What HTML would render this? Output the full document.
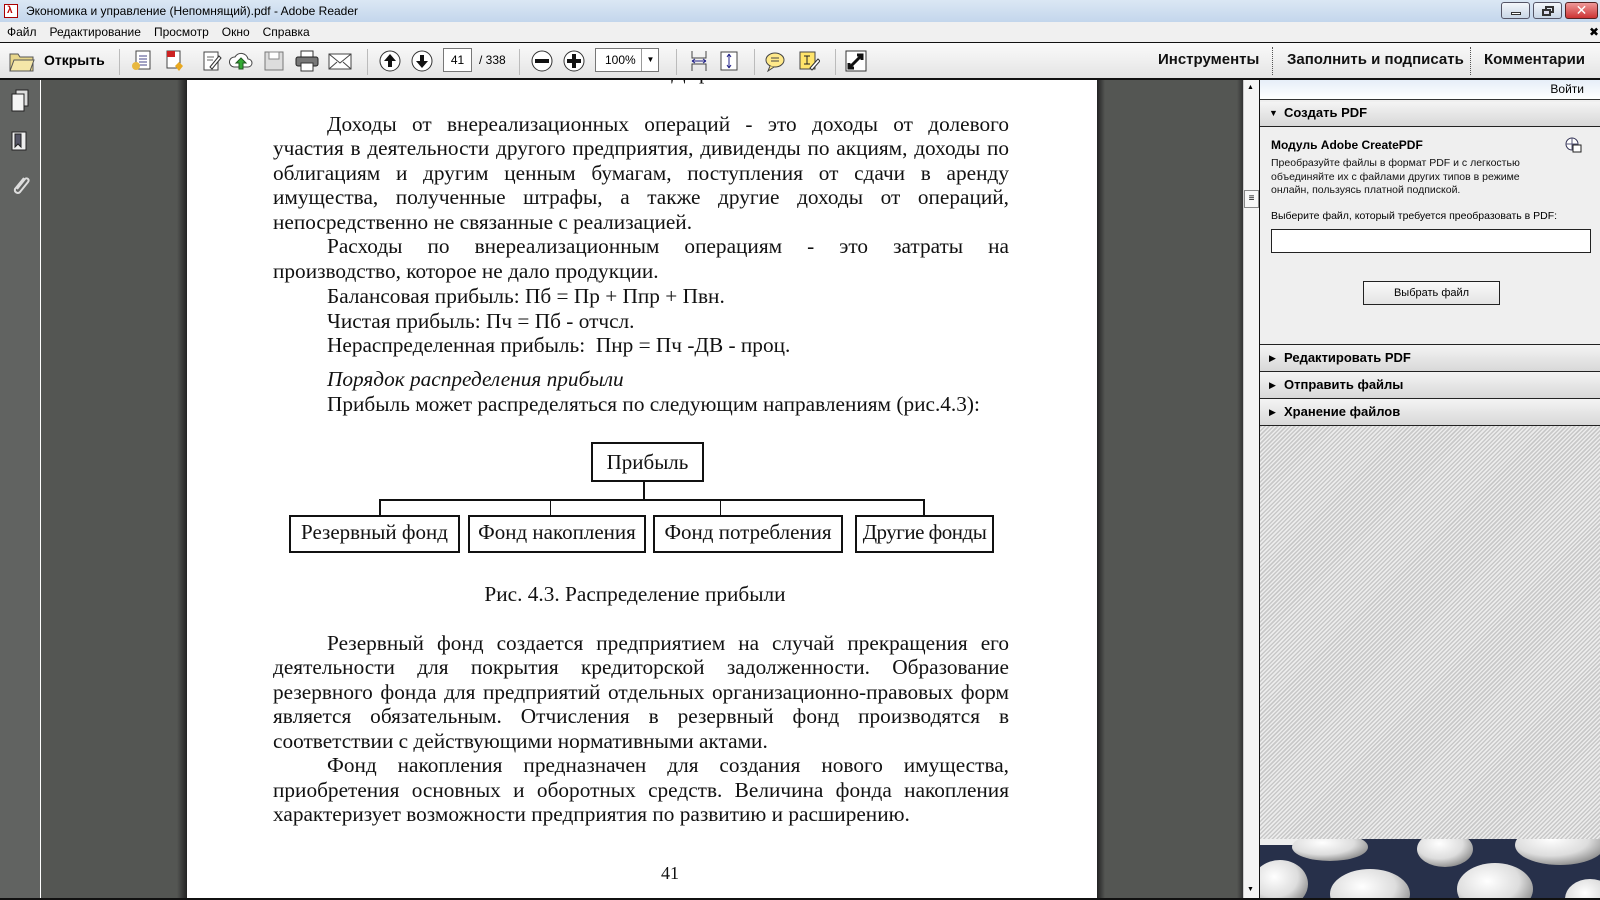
<!DOCTYPE html>
<html><head><meta charset="utf-8"><style>
*{margin:0;padding:0;box-sizing:border-box}
body{width:1600px;height:900px;overflow:hidden;position:relative;background:#545653;font-family:"Liberation Sans","DejaVu Sans",sans-serif;}
.a{position:absolute}
#title{left:0;top:0;width:1600px;height:22px;background:linear-gradient(#dbe7f4,#c3d6ec);font-size:12px;line-height:22px;}
#menu{left:0;top:22px;width:1600px;height:20px;background:#f0f0f0;font-size:12px;line-height:20px;}
#menu span{margin-left:7px;margin-right:6px}
#tb{left:0;top:42px;width:1600px;height:38px;background:linear-gradient(#fafafa,#e4e4e4);border-top:1px solid #111;border-bottom:2px solid #111;}
.ic{position:absolute;top:7px}
.sep{position:absolute;top:6px;width:1px;height:26px;background:#bbb}
.tab{position:absolute;top:0;height:36px;line-height:34px;font-weight:bold;font-size:15px;color:#111}
.dot{position:absolute;top:4px;height:28px;border-left:1px dotted #555}
#nav{left:0;top:80px;width:41px;height:818px;background:#616361;border-right:1px solid #fff}
#page{left:187px;top:80px;width:910px;height:818px;background:#fff;font-family:"Liberation Serif","DejaVu Serif",serif;font-size:21.3px;color:#111;overflow:hidden}
.l{position:absolute;left:86px;width:736px;white-space:nowrap;line-height:24px}
.j{text-align:justify;text-align-last:justify}
.i{left:140px}
.box{position:absolute;border:2px solid #111;text-align:center;font-size:21px;line-height:34px;white-space:nowrap}
#sb{left:1243px;top:80px;width:16px;height:818px;background:#f4f4f4;border-left:1px solid #ccc}
#rp{left:1259px;top:80px;width:341px;height:818px;background:#efefef;border-left:1px solid #111}
.hd{position:absolute;left:0;width:341px;height:27px;background:linear-gradient(#f4f4f4,#d8d8d8);border-top:1px solid #222;font-weight:bold;font-size:13px;line-height:26px;padding-left:24px}
.hd b{position:absolute;left:9px;font-size:9px}
#status{left:0;top:898px;width:1600px;height:2px;background:#111}
</style></head><body>
<div id="title" class="a"><span style="position:absolute;left:4px;top:4px;width:14px;height:14px;background:#fff;border:1px solid #a00"><span style="position:absolute;left:2px;top:1px;color:#b00;font-size:10px;line-height:10px;font-weight:bold">λ</span></span><span style="margin-left:26px">Экономика и управление (Непомнящий).pdf - Adobe Reader</span>
<div class="a" style="left:1501px;top:2px;width:29px;height:17px;border:1px solid #556;border-radius:3px;background:linear-gradient(#f4f7fb,#c9d6e6)"><div class="a" style="left:9px;top:9px;width:10px;height:3px;background:#fff;border:1px solid #333"></div></div>
<div class="a" style="left:1533px;top:2px;width:29px;height:17px;border:1px solid #556;border-radius:3px;background:linear-gradient(#f4f7fb,#c9d6e6)"><div class="a" style="left:11px;top:3px;width:9px;height:7px;border:2px solid #333"></div><div class="a" style="left:8px;top:6px;width:9px;height:7px;border:2px solid #333;background:#dde"></div></div>
<div class="a" style="left:1565px;top:2px;width:33px;height:17px;border:1px solid #522;border-radius:3px;background:linear-gradient(#e99,#c33);color:#fff;font-weight:bold;text-align:center;line-height:15px;font-size:14px">✕</div></div>
<div id="menu" class="a"><span>Файл</span><span>Редактирование</span><span>Просмотр</span><span>Окно</span><span>Справка</span><span class="a" style="left:1582px;top:0;font-weight:bold">✖</span></div>
<div id="tb" class="a">
<svg class="ic" style="left:9px;top:7px" width="26" height="22"><path d="M1 4h8l2 3h13v14H1z" fill="#e8d68a" stroke="#555"/><path d="M1 21l4-11h20l-4 11z" fill="#f4e6a8" stroke="#555"/></svg>
<div class="a" style="left:44px;top:0;line-height:34px;font-weight:bold;font-size:14px">Открыть</div>
<div class="sep" style="left:119px"></div>
<svg class="ic" style="left:131px" width="22" height="22"><rect x="5" y="1" width="14" height="18" fill="#fff" stroke="#444"/><path d="M8 6h8M8 9h8M8 12h8M8 15h8" stroke="#448"/><circle cx="5" cy="16" r="4" fill="#e8b840"/></svg>
<svg class="ic" style="left:164px" width="22" height="22"><rect x="3" y="1" width="13" height="17" fill="#fff" stroke="#444"/><rect x="3" y="1" width="8" height="6" fill="#c22"/><path d="M15 12l4 4-4 5-4-5z" fill="#e8a820"/></svg>
<svg class="ic" style="left:201px" width="22" height="22"><rect x="3" y="2" width="14" height="18" fill="#fff" stroke="#444"/><path d="M6 7h7M6 10h6" stroke="#666"/><path d="M9 17l9-11 2 2-9 11z" fill="#fff" stroke="#333"/></svg>
<svg class="ic" style="left:229px" width="24" height="22"><path d="M5 17a5 5 0 0 1 1-10 7 7 0 0 1 13 2 4 4 0 0 1 0 8z" fill="#fff" stroke="#444"/><path d="M12 8l-5 5h3v6h4v-6h3z" fill="#3a3" stroke="#252"/></svg>
<svg class="ic" style="left:263px" width="22" height="22"><rect x="2" y="2" width="18" height="18" fill="#ddd" stroke="#777"/><rect x="6" y="2" width="10" height="7" fill="#fff" stroke="#888"/></svg>
<svg class="ic" style="left:295px" width="24" height="22"><rect x="6" y="1" width="12" height="7" fill="#fff" stroke="#333"/><rect x="1" y="7" width="22" height="9" rx="2" fill="#777" stroke="#222"/><rect x="6" y="13" width="12" height="8" fill="#fff" stroke="#333"/></svg>
<svg class="ic" style="left:328px" width="24" height="22"><rect x="1" y="4" width="22" height="15" fill="#fff" stroke="#444"/><path d="M1 4l11 9 11-9M1 19l8-7M23 19l-8-7" fill="none" stroke="#444"/></svg>
<div class="sep" style="left:367px"></div>
<svg class="ic" style="left:379px" width="22" height="22"><circle cx="11" cy="11" r="10" fill="#fff" stroke="#333"/><path d="M11 4l-6 7h4v6h4v-6h4z" fill="#111"/></svg>
<svg class="ic" style="left:411px" width="22" height="22"><circle cx="11" cy="11" r="10" fill="#fff" stroke="#333"/><path d="M11 18l-6-7h4V5h4v6h4z" fill="#111"/></svg>
<div class="a" style="left:443px;top:5px;width:29px;height:24px;background:#fff;border:1px solid #777;font-size:12px;line-height:22px;text-align:center">41</div>
<div class="a" style="left:479px;top:5px;font-size:12px;line-height:24px">/ 338</div>
<div class="sep" style="left:519px"></div>
<svg class="ic" style="left:531px" width="22" height="22"><circle cx="11" cy="11" r="10" fill="#fff" stroke="#333"/><rect x="4" y="9" width="14" height="4" fill="#111"/></svg>
<svg class="ic" style="left:563px" width="22" height="22"><circle cx="11" cy="11" r="10" fill="#fff" stroke="#333"/><path d="M4 9h5V4h4v5h5v4h-5v5H9v-5H4z" fill="#111"/></svg>
<div class="a" style="left:595px;top:5px;width:64px;height:24px;background:#fff;border:1px solid #777;font-size:12px;line-height:22px;padding-left:9px">100%<span class="a" style="left:45px;top:0;width:18px;height:22px;border-left:1px solid #999;text-align:center;font-size:8px">▼</span></div>
<div class="sep" style="left:676px"></div>
<svg class="ic" style="left:689px" width="20" height="22"><path d="M3 1v7h14V1M3 21v-7h14v7" fill="none" stroke="#444"/><path d="M3 11h14M3 11l3-2M3 11l3 2M17 11l-3-2M17 11l-3 2" stroke="#228" fill="none"/></svg>
<svg class="ic" style="left:719px" width="20" height="22"><rect x="2" y="2" width="16" height="18" fill="#fff" stroke="#444"/><path d="M10 4v14M10 4l-2 3M10 4l2 3M10 18l-2-3M10 18l2-3" stroke="#228" fill="none"/></svg>
<div class="sep" style="left:754px"></div>
<svg class="ic" style="left:764px" width="22" height="22"><ellipse cx="11" cy="10" rx="9" ry="7" fill="#ffe98a" stroke="#444"/><path d="M6 16l-2 5 6-4" fill="#ffe98a" stroke="#444"/><path d="M7 8h8M7 11h8" stroke="#444"/></svg>
<svg class="ic" style="left:798px" width="22" height="22"><rect x="2" y="2" width="15" height="17" fill="#ffe46a" stroke="#444"/><path d="M6 6h6M9 6v8M6 14h6" stroke="#222"/><path d="M12 18l8-9 2 2-8 9z" fill="#fff" stroke="#333"/></svg>
<div class="sep" style="left:835px"></div>
<svg class="ic" style="left:845px" width="22" height="22"><rect x="1" y="1" width="20" height="20" fill="#fff" stroke="#333"/><path d="M4 18l13-13M12 5h5v5M4 13v5h5" stroke="#111" stroke-width="3" fill="none"/></svg>
<div class="tab" style="left:1158px">Инструменты</div>
<div class="dot" style="left:1272px"></div>
<div class="tab" style="left:1287px">Заполнить и подписать</div>
<div class="dot" style="left:1470px"></div>
<div class="tab" style="left:1484px">Комментарии</div>
</div>
<div id="nav" class="a">
<svg class="a" style="left:9px;top:9px" width="22" height="24"><rect x="7" y="1" width="12" height="16" fill="#ddd" stroke="#222"/><rect x="3" y="5" width="12" height="17" fill="#f4f4f4" stroke="#222"/></svg>
<svg class="a" style="left:9px;top:51px" width="22" height="24"><rect x="3" y="1" width="14" height="18" fill="#eee" stroke="#222"/><path d="M6 3v13l3-3 3 3V3z" fill="#556" stroke="#222"/></svg>
<svg class="a" style="left:9px;top:94px" width="22" height="24"><path d="M15 4L6 15a3 3 0 0 0 5 3l8-10a2 2 0 0 0-3-3L8 15" fill="none" stroke="#ddd" stroke-width="2"/></svg>
</div>
<div class="a" style="left:42px;top:80px;width:145px;height:818px;background:linear-gradient(90deg,#545653 0,#545653 135px,#222 145px)"></div>
<div class="a" style="left:1097px;top:80px;width:146px;height:818px;background:linear-gradient(90deg,#222 0,#545653 8px,#545653 140px,#333 146px)"></div>
<div id="page" class="a">
<div class="l" style="left:420px;top:-20px;letter-spacing:1px">Пвн – Дпр Рвн.</div>
<div class="l j i" style="top:32px;width:682px">Доходы от внереализационных операций - это доходы от долевого</div>
<div class="l j" style="top:56px">участия в деятельности другого предприятия, дивиденды по акциям, доходы по</div>
<div class="l j" style="top:81px">облигациям и другим ценным бумагам, поступления от сдачи в аренду</div>
<div class="l j" style="top:105px">имущества, полученные штрафы, а также другие доходы от операций,</div>
<div class="l" style="top:130px">непосредственно не связанные с реализацией.</div>
<div class="l j i" style="top:154px;width:682px">Расходы по внереализационным операциям - это затраты на</div>
<div class="l" style="top:179px">производство, которое не дало продукции.</div>
<div class="l i" style="top:204px">Балансовая прибыль: Пб = Пр + Ппр + Пвн.</div>
<div class="l i" style="top:229px">Чистая прибыль: Пч = Пб - отчсл.</div>
<div class="l i" style="top:253px">Нераспределенная прибыль:&nbsp; Пнр = Пч -ДВ - проц.</div>
<div class="l i" style="top:287px;font-style:italic">Порядок распределения прибыли</div>
<div class="l i" style="top:312px">Прибыль может распределяться по следующим направлениям (рис.4.3):</div>
<div class="box" style="left:404px;top:362px;width:113px;height:40px;line-height:36px">Прибыль</div>
<div class="a" style="left:456px;top:402px;width:2px;height:19px;background:#111"></div>
<div class="a" style="left:192px;top:419px;width:546px;height:2px;background:#111"></div>
<div class="a" style="left:192px;top:419px;width:2px;height:16px;background:#111"></div>
<div class="a" style="left:363px;top:419px;width:1px;height:16px;background:#111"></div>
<div class="a" style="left:533px;top:419px;width:1px;height:16px;background:#111"></div>
<div class="a" style="left:736px;top:419px;width:2px;height:16px;background:#111"></div>
<div class="box" style="left:102px;top:435px;width:171px;height:38px;line-height:30px">Резервный фонд</div>
<div class="box" style="left:281px;top:435px;width:178px;height:38px;line-height:30px">Фонд накопления</div>
<div class="box" style="left:466px;top:435px;width:190px;height:38px;line-height:30px">Фонд потребления</div>
<div class="box" style="left:668px;top:435px;width:139px;height:38px;line-height:30px;letter-spacing:-0.5px">Другие фонды</div>
<div class="l" style="left:0;width:910px;text-align:center;top:502px;padding-right:14px">Рис. 4.3. Распределение прибыли</div>
<div class="l j i" style="top:551px;width:682px">Резервный фонд создается предприятием на случай прекращения его</div>
<div class="l j" style="top:575px">деятельности для покрытия кредиторской задолженности. Образование</div>
<div class="l j" style="top:600px">резервного фонда для предприятий отдельных организационно-правовых форм</div>
<div class="l j" style="top:624px">является обязательным. Отчисления в резервный фонд производятся в</div>
<div class="l" style="top:649px">соответствии с действующими нормативными актами.</div>
<div class="l j i" style="top:673px;width:682px">Фонд накопления предназначен для создания нового имущества,</div>
<div class="l j" style="top:698px">приобретения основных и оборотных средств. Величина фонда накопления</div>
<div class="l" style="top:722px">характеризует возможности предприятия по развитию и расширению.</div>
<div class="l" style="left:0;width:910px;text-align:center;top:781px;font-size:18px;padding-left:56px">41</div>
</div>
<div id="sb" class="a"><div class="a" style="left:3px;top:4px;font-size:7px">▲</div><div class="a" style="left:0;top:110px;width:15px;height:18px;border:1px solid #888;background:#f8f8f8;font-size:10px;text-align:center;line-height:16px">≡</div><div class="a" style="left:3px;top:806px;font-size:7px">▼</div></div>
<div id="rp" class="a">
<div class="a" style="left:0;top:0;width:341px;height:20px;background:linear-gradient(#e6eef8,#fff);border-bottom:1px solid #333;font-size:12px;line-height:18px;text-align:right;padding-right:17px">Войти</div>
<div class="hd" style="top:22px;height:24px;line-height:22px;border-top:none"><b style="top:0">▼</b>Создать PDF</div>
<div class="a" style="left:0;top:46px;width:341px;height:218px;border-top:1px solid #222;background:#efefef"></div>
<div class="a" style="left:11px;top:58px;font-size:12px;font-weight:bold">Модуль Adobe CreatePDF</div>
<svg class="a" style="left:304px;top:56px" width="18" height="18"><circle cx="8" cy="8" r="6" fill="#fff" stroke="#335"/><path d="M2 8h12M8 2v12" stroke="#557"/><rect x="9" y="9" width="8" height="7" fill="#fff" stroke="#222"/></svg>
<div class="a" style="left:11px;top:77px;font-size:10.5px;line-height:13.5px;color:#111">Преобразуйте файлы в формат PDF и с легкостью<br>объединяйте их с файлами других типов в режиме<br>онлайн, пользуясь платной подпиской.</div>
<div class="a" style="left:11px;top:130px;font-size:10.5px">Выберите файл, который требуется преобразовать в PDF:</div>
<div class="a" style="left:11px;top:149px;width:320px;height:24px;background:#fff;border:1px solid #222"></div>
<div class="a" style="left:103px;top:201px;width:137px;height:24px;border:1px solid #222;background:linear-gradient(#fafafa,#e4e4e4);font-size:11px;text-align:center;line-height:22px">Выбрать файл</div>
<div class="hd" style="top:264px"><b>▶</b>Редактировать PDF</div>
<div class="hd" style="top:291px"><b>▶</b>Отправить файлы</div>
<div class="hd" style="top:318px;border-bottom:1px solid #222;height:28px"><b>▶</b>Хранение файлов</div>
<div class="a" style="left:0;top:346px;width:341px;height:413px;background:repeating-linear-gradient(135deg,#c8c8c8 0,#c8c8c8 1.5px,#ececec 1.5px,#ececec 3px)"></div>
<svg class="a" style="left:0;top:759px" width="341" height="59"><rect width="341" height="59" fill="#27304a"/><rect x="0" y="0" width="42" height="6" fill="#eee"/>
<defs><radialGradient id="g" cx="40%" cy="35%" r="70%"><stop offset="0" stop-color="#fff"/><stop offset="0.6" stop-color="#ddd"/><stop offset="1" stop-color="#888"/></radialGradient></defs>
<ellipse cx="20" cy="45" rx="28" ry="24" fill="url(#g)"/><ellipse cx="70" cy="8" rx="38" ry="14" fill="url(#g)"/><ellipse cx="110" cy="55" rx="40" ry="25" fill="url(#g)"/><ellipse cx="185" cy="10" rx="28" ry="18" fill="url(#g)"/><ellipse cx="235" cy="50" rx="38" ry="26" fill="url(#g)"/><ellipse cx="300" cy="6" rx="45" ry="20" fill="url(#g)"/><ellipse cx="330" cy="60" rx="25" ry="20" fill="url(#g)"/></svg>
</div>
<div id="status" class="a"></div>
</body></html>
